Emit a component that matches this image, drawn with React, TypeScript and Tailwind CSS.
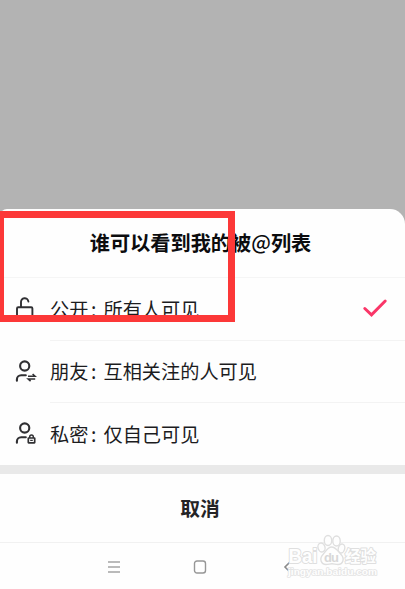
import type { ReactNode } from "react";

type Option = {
  label: string;
  detail: string;
  icon: ReactNode;
  selected?: boolean;
};

function UnlockIcon() {
  return (
    <svg width="24" height="26" viewBox="0 0 24 26" fill="none" stroke="#303033" strokeWidth="1.9">
      <rect x="4" y="11.2" width="15.4" height="11.5" rx="1.2" />
      <path d="M8 11V6.400a3.700 3.700 0 0 1 7.400-.9" strokeLinecap="round" />
    </svg>
  );
}

function Person() {
  return (
    <>
      <circle cx="11.7" cy="7" r="4.600" />
      <path d="M3.900 21.800v-1.300a4.200 4.200 0 0 1 4.200-4.200h4.700" strokeLinecap="round" />
    </>
  );
}

function FriendsIcon() {
  return (
    <svg width="24" height="26" viewBox="0 0 24 26" fill="none" stroke="#303033" strokeWidth="2.1">
      <Person />
      <path d="M15 17.200h7l-2.400-2.200M22.200 20h-7l2.400 2.200" strokeWidth="1.600" />
    </svg>
  );
}

function PrivateIcon() {
  return (
    <svg width="24" height="26" viewBox="0 0 24 26" fill="none" stroke="#303033" strokeWidth="2.1">
      <Person />
      <rect x="15.300" y="17" width="6.400" height="4.900" rx="0.3" strokeWidth="1.700" />
      <path d="M16.700 17v-1.300a1.800 1.800 0 0 1 3.600 0v1.300" strokeWidth="1.500" />
      <path d="M17.200 19.400h2.600" strokeWidth="1.200" />
    </svg>
  );
}

const options: Option[] = [
  { label: "公开", detail: "所有人可见", icon: <UnlockIcon />, selected: true },
  { label: "朋友", detail: "互相关注的人可见", icon: <FriendsIcon /> },
  { label: "私密", detail: "仅自己可见", icon: <PrivateIcon /> },
];

function OptionRow({ label, detail, icon, selected }: Option) {
  return (
    <div className="flex h-[62.5px] items-center pl-[13px]">
      <span className="w-[37px] shrink-0">{icon}</span>
      <div className="flex h-full flex-1 items-center border-b border-[#f3f3f3] pt-px text-[19.2px] text-[#1c1c1e]">
        <span className="w-[39px] whitespace-nowrap">{label}</span>
        <span className="w-[14.5px] pl-[2px]">:</span>
        <span className="flex-1 whitespace-nowrap">{detail}</span>
        {selected && (
          <svg className="mr-[17px] mb-[3px]" width="26" height="20" viewBox="0 0 26 20" fill="none" stroke="#fa3668" strokeWidth="3" strokeLinecap="round">
            <path d="M2.800 10.500l6.700 6.300L23.200 3" />
          </svg>
        )}
      </div>
    </div>
  );
}

function Watermark() {
  return (
    <svg
      className="absolute top-[530px] left-[282px]"
      width="110"
      height="52"
      viewBox="0 0 110 52"
      fill="#fefefe"
      stroke="#dfdfdf"
      strokeWidth="1.4"
      strokeLinejoin="round"
    >
      <ellipse cx="39.500" cy="17.500" rx="3.500" ry="4.500" transform="rotate(-15 39.500 17.500)" />
      <ellipse cx="46" cy="10.500" rx="3.700" ry="5" />
      <ellipse cx="54.500" cy="11" rx="3.700" ry="5" />
      <ellipse cx="59.500" cy="18.500" rx="3.200" ry="4.500" transform="rotate(15 59.500 18.500)" />
      <path d="M49.500 17c-4 0-5.500 4.500-8.500 7.500-4 4-2 10 3 10 2.500 0 4-.8 6-.8s3.500 .8 6 .8c5 0 7-6 3-10-3-3-5-7.500-9.500-7.500z" />
      <g className="font-['Liberation_Sans'] font-bold" strokeWidth="2" paintOrder="stroke">
        <text x="6.500" y="32.500" fontSize="20" textLength="29" lengthAdjust="spacingAndGlyphs">Bai</text>
        <text x="42" y="31.500" fontSize="13" textLength="15" fill="#d8d8d8" stroke="none">du</text>
        <text x="6" y="45" fontSize="9.500" textLength="89" lengthAdjust="spacingAndGlyphs" strokeWidth="1.600" stroke="#e4e4e4">jingyan.baidu.com</text>
        <text x="63" y="32" fontSize="15.500" textLength="31" className="font-['Noto_Sans_CJK_SC']">经验</text>
      </g>
    </svg>
  );
}

export default function App() {
  return (
    <div className="relative flex h-[589px] w-[405px] flex-col overflow-hidden bg-[#b3b3b3] pt-[209px] font-['Noto_Sans_CJK_SC',sans-serif]">
      <div className="flex flex-1 flex-col rounded-tl-[7px] rounded-tr-[15px] bg-[#fefefe]">
        <h1 className="flex h-[69px] items-center justify-center border-b border-[#f5f5f5] pt-px pr-[4px] text-[20.2px] font-bold text-[#0c0c0e]">
          谁可以看到我的被<span className="relative -top-px font-medium">@</span>列表
        </h1>
        <div className="h-[187px]">
          {options.map((option) => (
            <OptionRow key={option.label} {...option} />
          ))}
        </div>
        <div className="h-[9px] shrink-0 bg-[#e9e9e9]" />
        <button className="h-[69px] shrink-0 border-b border-[#f1f1f1] pr-[5px] text-[19.8px] font-bold text-[#242426]">
          取消
        </button>
        <nav className="flex h-[48px] items-center">
          <svg className="ml-[107px]" width="14" height="14" viewBox="0 0 14 14" fill="none" stroke="#a4a4a4" strokeWidth="1.3">
            <path d="M1 2h12M1 7h12M1 12h12" />
          </svg>
          <svg className="ml-[72px]" width="14" height="14" viewBox="0 0 14 14" fill="none" stroke="#969696" strokeWidth="1.4">
            <rect x="1.500" y="1" width="11" height="12" rx="2.500" />
          </svg>
          <svg className="ml-[76px]" width="9" height="14" viewBox="0 0 9 14" fill="none" stroke="#8a8a8a" strokeWidth="1.6">
            <path d="M7.500 1.500L2 7l5.500 5.500" />
          </svg>
        </nav>
      </div>
      <Watermark />
      {/* highlight frame over the title and first option */}
      <div className="absolute top-[211px] left-0 h-[111px] w-[235px] border-[7px] border-l-4 border-[#fc3838]" />
    </div>
  );
}
